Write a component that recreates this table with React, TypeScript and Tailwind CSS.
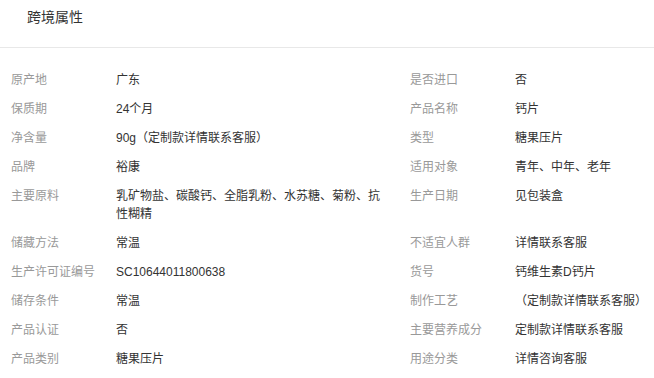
import React from 'react';

type Attr = { label: string; value: string };

const rows: [Attr, Attr][] = [
  [{ label: '原产地', value: '广东' }, { label: '是否进口', value: '否' }],
  [{ label: '保质期', value: '24个月' }, { label: '产品名称', value: '钙片' }],
  [{ label: '净含量', value: '90g（定制款详情联系客服）' }, { label: '类型', value: '糖果压片' }],
  [{ label: '品牌', value: '裕康' }, { label: '适用对象', value: '青年、中年、老年' }],
  [
    { label: '主要原料', value: '乳矿物盐、碳酸钙、全脂乳粉、水苏糖、菊粉、抗性糊精' },
    { label: '生产日期', value: '见包装盒' },
  ],
  [{ label: '储藏方法', value: '常温' }, { label: '不适宜人群', value: '详情联系客服' }],
  [{ label: '生产许可证编号', value: 'SC10644011800638' }, { label: '货号', value: '钙维生素D钙片' }],
  [{ label: '储存条件', value: '常温' }, { label: '制作工艺', value: '（定制款详情联系客服）' }],
  [{ label: '产品认证', value: '否' }, { label: '主要营养成分', value: '定制款详情联系客服' }],
  [{ label: '产品类别', value: '糖果压片' }, { label: '用途分类', value: '详情咨询客服' }],
];

const Cell: React.FC<{ item: Attr; wide?: boolean }> = ({ item, wide }) => (
  <div className={`flex ${wide ? 'w-[399px] pr-[24px]' : 'flex-1'}`}>
    <div className="w-[105px] shrink-0 text-[#999]">{item.label}</div>
    <div className="flex-1 text-[#333]">{item.value}</div>
  </div>
);

export default function App() {
  return (
    <div
      className="w-[654px] h-[378px] overflow-hidden bg-white text-[12px] leading-[18px]"
      style={{ fontFamily: '"Liberation Sans", "Noto Sans CJK SC", sans-serif' }}
    >
      {/* Header */}
      <div className="h-[48px] border-b border-[#e8e8e8] pl-[27px] pt-[7px]">
        <h2 className="text-[14px] leading-[20px] text-[#333]">跨境属性</h2>
      </div>

      {/* Attribute list */}
      <div className="pl-[11px] pt-[23px] flex flex-col gap-[11px]">
        {rows.map(([left, right], i) => (
          <div key={i} className="flex">
            <Cell item={left} wide />
            <Cell item={right} />
          </div>
        ))}
      </div>
    </div>
  );
}
